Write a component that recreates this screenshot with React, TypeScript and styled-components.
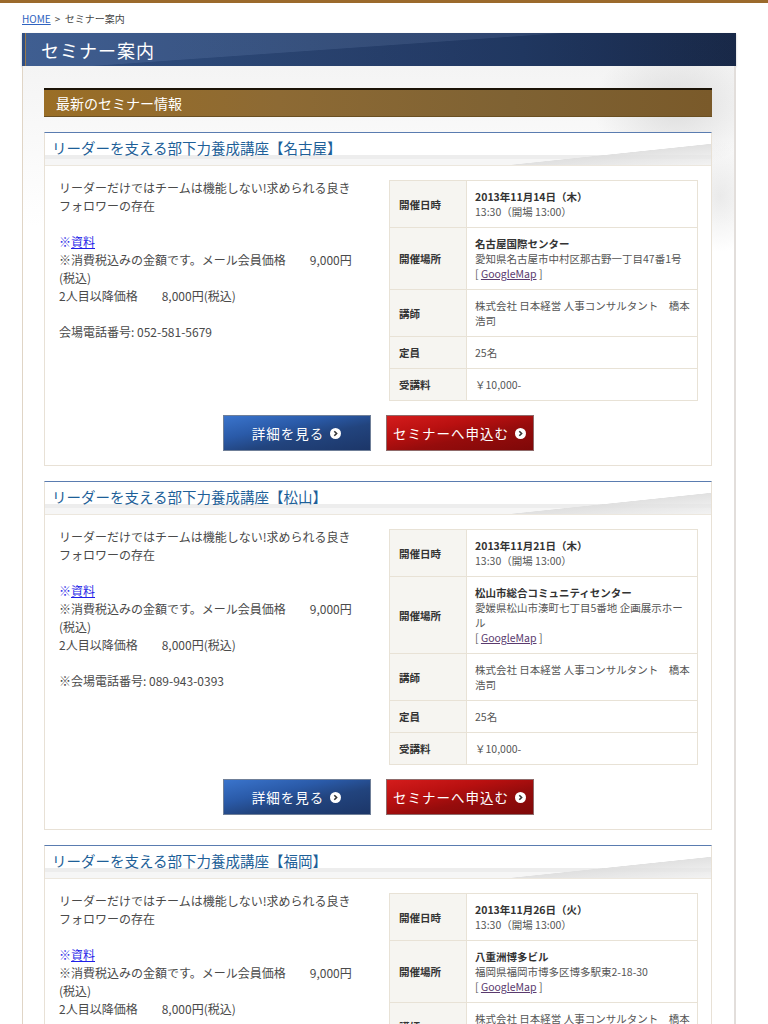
import React from "react";
import styled, { createGlobalStyle } from "styled-components";

const GlobalStyle = createGlobalStyle`
  html, body {
    margin: 0;
    padding: 0;
    background: #fff;
  }
  body {
    font-family: "Noto Sans CJK JP", "Noto Sans", sans-serif;
    color: #444;
  }
  * { box-sizing: border-box; }
`;

const SERIF = `"Liberation Serif", "Noto Sans CJK JP", serif`;

const TopLine = styled.div`
  height: 3px;
  background: #9b6a2c;
`;

const Breadcrumb = styled.div`
  padding: 9px 0 0 22px;
  height: 30px;
  font-size: 10px;
  line-height: 14px;
  color: #444;
  a {
    color: #2f63c0;
    text-decoration: underline;
  }
  span {
    margin-left: 4px;
  }
`;

const Page = styled.div`
  margin-left: 22px;
  width: 714px;
`;

const PageTitle = styled.h1`
  margin: 0;
  height: 33px;
  display: flex;
  align-items: center;
  padding-left: 16px;
  font-family: ${SERIF};
  font-weight: normal;
  font-size: 18px;
  color: #fff;
  letter-spacing: 1px;
  border-left: 3px solid #2f4e82;
  box-shadow: inset 1px 0 0 #9a7a4a, 0 1px 2px rgba(0, 0, 0, 0.25);
  background:
    linear-gradient(176deg, rgba(255,255,255,0.06) 0 45%, rgba(0,0,0,0.06) 46% 100%),
    linear-gradient(to right, #33548a 0%, #2b4675 40%, #223a66 70%, #1a2b4c 100%);
`;

const Content = styled.div`
  border-left: 1px solid #e0d5c6;
  border-right: 2px solid #e2dedb;
  padding: 22px 22px 0 21px;
  background:
    radial-gradient(ellipse 120px 90px at 92% 40px, rgba(200,200,200,0.55), rgba(255,255,255,0) 70%),
    radial-gradient(ellipse 60px 80px at 98% 130px, rgba(215,215,215,0.5), rgba(255,255,255,0) 70%),
    linear-gradient(to bottom, #f4f4f4 0px, #fff 160px);
`;

const SectionBar = styled.h2`
  margin: 0 0 15px;
  height: 29px;
  display: flex;
  align-items: center;
  padding-left: 12px;
  border-top: 2px solid #1c1408;
  border-bottom: 1px solid #6a4f22;
  font-family: ${SERIF};
  font-weight: normal;
  font-size: 14px;
  color: #fff;
  background: linear-gradient(to right, #9a6e26 0%, #8d6a34 35%, #7f6233 70%, #7a5a2a 100%);
`;

const Card = styled.section`
  border: 1px solid #e8e1d6;
  border-top: 1px solid #5a7cb0;
  background: #fff;
  margin-bottom: 15px;
`;

const CardHead = styled.h3`
  margin: 0;
  height: 33px;
  display: flex;
  align-items: center;
  padding: 0 0 4px 7px;
  font-weight: normal;
  font-size: 14.5px;
  color: #1e5f98;
  border-bottom: 1px solid #ece7de;
  background:
    linear-gradient(174deg, rgba(255,255,255,0) 0 62%, rgba(222,222,222,0.9) 63%, rgba(240,240,240,0.6) 100%) right / 35% 100% no-repeat,
    linear-gradient(to bottom, #fff 0 70%, #ededed 70% 82%, #f6f6f6 82% 100%);
`;

const CardBody = styled.div`
  display: grid;
  grid-template-columns: 300px 309px;
  column-gap: 30px;
  padding: 13px 14px 0 14px;
`;

const Lead = styled.div`
  font-size: 12px;
  line-height: 18px;
  color: #4a4a4a;
  p {
    margin: 0 0 18px;
  }
  a {
    color: #1f1fe8;
  }
`;

const Mark = styled.span`
  color: #3434e8;
`;

const InfoTable = styled.table`
  border-collapse: collapse;
  width: 309px;
  margin-top: 1px;
  border: 1px solid #e8e2d6;
  font-size: 10.5px;
  line-height: 15px;
  th, td {
    border: 1px solid #e8e2d6;
    padding: 8px 9px;
    text-align: left;
    vertical-align: middle;
  }
  th {
    width: 77px;
    background: #f6f5f1;
    color: #333;
    font-weight: bold;
  }
  td {
    padding: 8px 6px 8px 8px;
    color: #555;
  }
  strong {
    color: #333;
  }
  a {
    color: #5a3a6e;
  }
`;

const Buttons = styled.div`
  display: flex;
  justify-content: center;
  gap: 15px;
  padding: 14px 0 14px;
`;

const Btn = styled.a<{ $tone: "blue" | "red" }>`
  width: 148px;
  height: 36px;
  display: flex;
  align-items: center;
  justify-content: center;
  gap: 6px;
  font-family: ${SERIF};
  font-size: 13.5px;
  color: #fff;
  letter-spacing: 1px;
  text-decoration: none;
  border: 1px solid ${(p) => (p.$tone === "blue" ? "#6f7f98" : "#8f6a6a")};
  background: ${(p) =>
    p.$tone === "blue"
      ? "linear-gradient(168deg, #3a74cc 0%, #2a5aa8 35%, #22447e 60%, #1c3668 100%)"
      : "linear-gradient(168deg, #d41c1c 0%, #b81010 35%, #960c0c 60%, #7e0808 100%)"};
`;

const Arrow = () => (
  <svg width="11" height="11" viewBox="0 0 11 11">
    <circle cx="5.5" cy="5.5" r="5.5" fill="#fff" />
    <path d="M4.3 3.2 L6.6 5.5 L4.3 7.8" stroke="#333" strokeWidth="1.6" fill="none" />
  </svg>
);

type Seminar = {
  city: string;
  date: string;
  venue: string;
  address: string;
  phone: string;
};

const seminars: Seminar[] = [
  {
    city: "名古屋",
    date: "2013年11月14日（木）",
    venue: "名古屋国際センター",
    address: "愛知県名古屋市中村区那古野一丁目47番1号",
    phone: "会場電話番号: 052-581-5679",
  },
  {
    city: "松山",
    date: "2013年11月21日（木）",
    venue: "松山市総合コミュニティセンター",
    address: "愛媛県松山市湊町七丁目5番地 企画展示ホール",
    phone: "※会場電話番号: 089-943-0393",
  },
  {
    city: "福岡",
    date: "2013年11月26日（火）",
    venue: "八重洲博多ビル",
    address: "福岡県福岡市博多区博多駅東2-18-30",
    phone: "会場電話番号: 092-472-3333",
  },
];

const SeminarCard = ({ s }: { s: Seminar }) => (
  <Card>
    <CardHead>リーダーを支える部下力養成講座【{s.city}】</CardHead>
    <CardBody>
      <Lead>
        <p>
          リーダーだけではチームは機能しない!求められる良き
          <br />
          フォロワーの存在
        </p>
        <p>
          <Mark>※</Mark>
          <a href="#">資料</a>
          <br />
          ※消費税込みの金額です。メール会員価格　　9,000円(税込)
          <br />
          2人目以降価格　　8,000円(税込)
        </p>
        <p>{s.phone}</p>
      </Lead>
      <InfoTable>
        <tbody>
          <tr>
            <th>開催日時</th>
            <td>
              <strong>{s.date}</strong>
              <br />
              13:30（開場 13:00）
            </td>
          </tr>
          <tr>
            <th>開催場所</th>
            <td>
              <strong>{s.venue}</strong>
              <br />
              {s.address}
              <br />[ <a href="#">GoogleMap</a> ]
            </td>
          </tr>
          <tr>
            <th>講師</th>
            <td>株式会社 日本経営 人事コンサルタント　橋本浩司</td>
          </tr>
          <tr>
            <th>定員</th>
            <td>25名</td>
          </tr>
          <tr>
            <th>受講料</th>
            <td>￥10,000-</td>
          </tr>
        </tbody>
      </InfoTable>
    </CardBody>
    <Buttons>
      <Btn $tone="blue" href="#">
        詳細を見る <Arrow />
      </Btn>
      <Btn $tone="red" href="#">
        セミナーへ申込む <Arrow />
      </Btn>
    </Buttons>
  </Card>
);

export default function App() {
  return (
    <>
      <GlobalStyle />
      <TopLine />
      <Breadcrumb>
        <a href="#">HOME</a>
        <span>&gt;&nbsp;&nbsp;セミナー案内</span>
      </Breadcrumb>
      <Page>
        <PageTitle>セミナー案内</PageTitle>
        <Content>
          <SectionBar>最新のセミナー情報</SectionBar>
          {seminars.map((s) => (
            <SeminarCard key={s.city} s={s} />
          ))}
        </Content>
      </Page>
    </>
  );
}
